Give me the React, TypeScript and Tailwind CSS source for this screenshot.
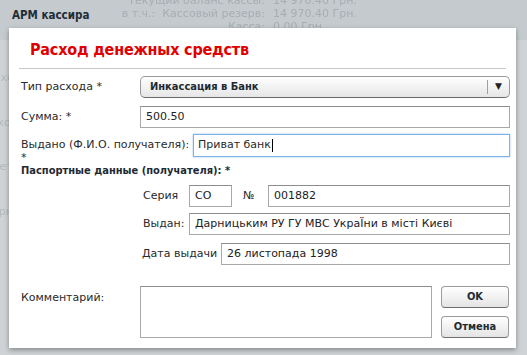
import React from "react";

const FONT = { fontFamily: '"DejaVu Sans", Verdana, sans-serif' };
const BOLD = { fontFamily: '"DejaVu Sans Condensed", "DejaVu Sans", Tahoma, sans-serif' };

const inputCls =
  "h-[22px] border border-[#a9a9a9] border-t-[#8c8c8c] bg-white px-[5px] text-[11px] text-[#222] flex items-center";

function Field({ value, className = "" }: { value?: string; className?: string }) {
  return <div className={`${inputCls} ${className}`}>{value}</div>;
}

function Button({ children }: { children: React.ReactNode }) {
  return (
    <button
      style={BOLD}
      className="h-[22px] w-[68px] rounded-[4px] border border-[#9a9a9a] border-b-[#6f6f6f] bg-gradient-to-b from-white to-[#e4e4e4] text-[11px] font-bold text-[#1e2a33]"
    >
      {children}
    </button>
  );
}

export default function App() {
  return (
    <div style={FONT} className="relative h-[355px] w-[527px] overflow-hidden bg-[#cfd3d5] text-[11px] text-[#2a2a2a]">
      {/* page behind the overlay */}
      <div className="h-[40px] bg-[#c4cacd]">
        <div className="flex">
          <div style={BOLD} className="w-[105px] pl-[12px] pt-[7px] text-[11.5px] font-bold text-[#1f2d36]">
            АРМ кассира
          </div>
          <div className="-mt-[6px] grid grid-cols-[160px_auto] gap-x-[8px] leading-[13px] text-[#a7aeb2] blur-[0.4px]">
            <span className="whitespace-nowrap text-right">Текущий баланс кассы:</span>
            <span className="whitespace-nowrap">14 970.40 Грн.</span>
            <span className="whitespace-nowrap text-right">в т.ч.:&nbsp; Кассовый резерв:</span>
            <span className="whitespace-nowrap">14 970.40 Грн.</span>
            <span className="text-right">Касса:</span>
            <span>0.00 Грн.</span>
          </div>
        </div>
      </div>
      <div className="-ml-[22px] flex flex-col gap-[28px] pt-[30px] text-[#b3b9bc] blur-[0.4px]">
        <span>Приход</span>
        <span>Расход</span>
        <span>Отчет</span>
        <span>Сторно</span>
      </div>

      {/* modal */}
      <div className="absolute left-[9px] top-[28px] w-[507px] bg-white pb-[10px] shadow-[0_2px_5px_rgba(0,0,0,0.35)]">
        <div
          style={BOLD}
          className="mx-[10px] flex h-[41px] items-center border-b border-[#c8c8c8] pl-[11px] pt-[4px] text-[16px] font-bold tracking-[-0.2px] text-[#e00000]"
        >
          Расход денежных средств
        </div>

        <div className="pl-[12px] pr-[6px]">
          {/* type */}
          <div className="mt-[7px] flex items-center">
            <span className="w-[119px]">Тип расхода *</span>
            <div className="flex h-[22px] flex-1 items-center rounded-[5px] border border-[#9a9a9a] border-b-[#6a6a6a] bg-gradient-to-b from-white to-[#e6e6e6]">
              <span style={BOLD} className="flex-1 pl-[9px] font-bold text-[#1e2a33]">
                Инкассация в Банк
              </span>
              <span className="h-[14px] border-l border-[#a0a0a0]" />
              <span className="w-[21px] text-center text-[9px] text-[#222]">▼</span>
            </div>
          </div>

          {/* sum */}
          <div className="mt-[8px] flex items-center">
            <span className="w-[119px]">Сумма: *</span>
            <Field value="500.50" className="flex-1" />
          </div>

          {/* recipient */}
          <div className="mt-[6px] flex items-start">
            <span className="w-[172px] pt-[4px] leading-[13px]">Выдано (Ф.И.О. получателя): *</span>
            <div className="flex h-[23px] flex-1 items-center border border-[#7fb2e4] bg-white px-[4px] shadow-[0_0_2px_#9cc8f0]">
              Приват банк<span className="ml-[1px] h-[13px] w-px bg-black" />
            </div>
          </div>

          {/* passport */}
          <div style={BOLD} className="font-bold leading-[13px] text-[#1e2a33]">
            Паспортные данные (получателя): *
          </div>

          <div className="ml-[122px] mt-[8px] flex items-center">
            <span className="w-[46px]">Серия</span>
            <Field value="СО" className="w-[43px]" />
            <span className="ml-[11px] w-[25px]">№</span>
            <Field value="001882" className="flex-1" />
          </div>

          <div className="ml-[122px] mt-[6px] flex items-center">
            <span className="w-[46px]">Выдан:</span>
            <Field value="Дарницьким РУ ГУ МВС УкраЇни в місті Києві" className="flex-1" />
          </div>

          <div className="ml-[121px] mt-[8px] flex items-center">
            <span className="w-[79px]">Дата выдачи</span>
            <Field value="26 листопада 1998" className="flex-1" />
          </div>

          {/* comment + buttons */}
          <div className="mt-[21px] flex items-start">
            <span className="w-[119px] pt-[5px] leading-[13px]">Комментарий:</span>
            <div className="h-[52px] w-[292px] border border-[#a9a9a9] border-t-[#8c8c8c] bg-white" />
            <div className="ml-[9px] flex flex-col gap-[8px]">
              <Button>OK</Button>
              <Button>Отмена</Button>
            </div>
          </div>
        </div>
      </div>
    </div>
  );
}
